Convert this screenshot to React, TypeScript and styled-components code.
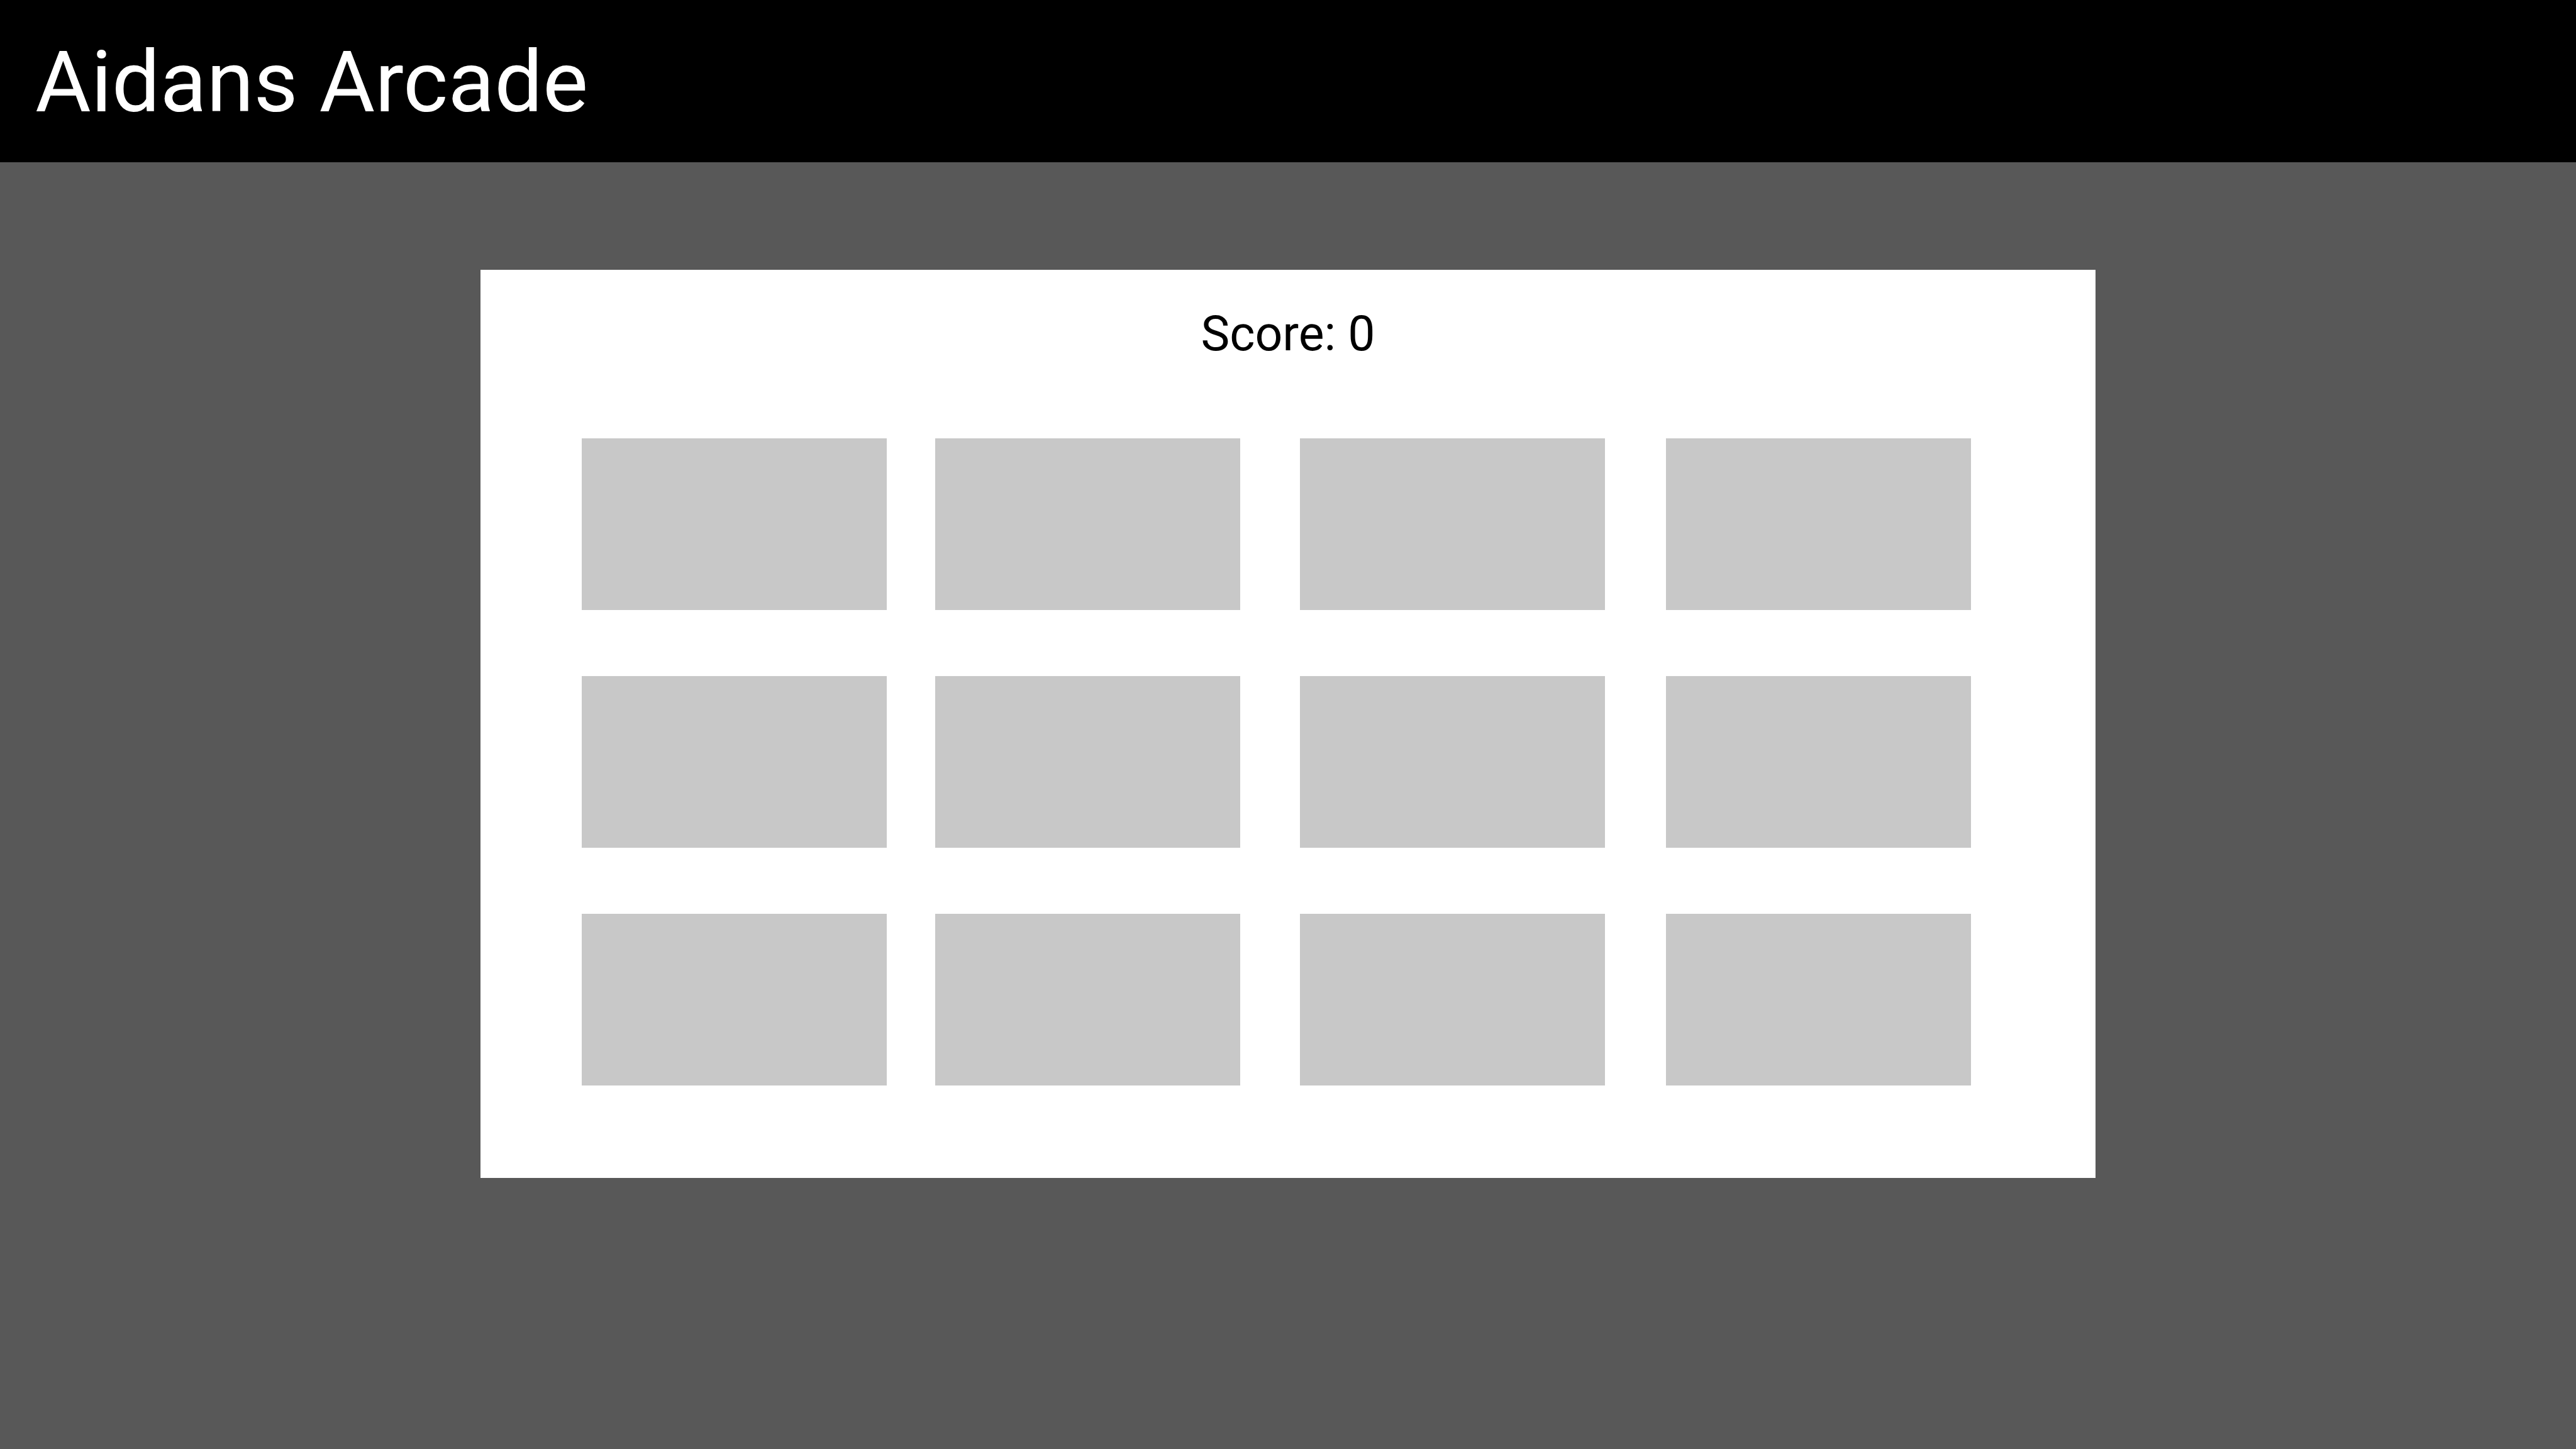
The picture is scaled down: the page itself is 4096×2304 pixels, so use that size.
import React, { useState } from "react";
import styled, { createGlobalStyle } from "styled-components";

const GlobalStyle = createGlobalStyle`
  *, *::before, *::after {
    box-sizing: border-box;
  }

  body {
    margin: 0;
    background: #585858;
    font-family: Roboto, "Liberation Sans", sans-serif;
  }
`;

const Header = styled.header`
  display: flex;
  align-items: center;
  padding: 51px 56px 47px;
  background: #000000;
`;

const Title = styled.h1`
  margin: 0;
  color: #ffffff;
  font-size: 136px;
  font-weight: 400;
  line-height: 160px;
`;

const Main = styled.main`
  display: flex;
  justify-content: center;
  padding: 171px 64px;
`;

const Game = styled.section`
  flex: 1;
  max-width: 2568px;
  padding: 57px 0 147px;
  background: #ffffff;
`;

const Score = styled.p`
  margin: 0 0 121px;
  color: #000000;
  font-size: 77px;
  line-height: 90px;
  text-align: center;
`;

const Board = styled.div`
  display: grid;
  grid-template-columns: 485fr 77fr 485fr 95fr 485fr 97fr 485fr;
  row-gap: 105px;
  padding: 0 198px 0 161px;
`;

const Tile = styled.button<{ $column: number }>`
  grid-column: ${({ $column }) => $column * 2 + 1};
  height: 273px;
  padding: 0;
  border: 0;
  background: #c8c8c8;
  cursor: pointer;
`;

const COLUMNS = 4;
const TILES = Array.from({ length: 12 }, (_, index) => index);

export default function App() {
  const [score] = useState(0);

  return (
    <>
      <GlobalStyle />
      <Header>
        <Title>Aidans Arcade</Title>
      </Header>
      <Main>
        <Game>
          <Score>Score: {score}</Score>
          <Board>
            {TILES.map((tile) => (
              <Tile
                key={tile}
                type="button"
                $column={tile % COLUMNS}
                aria-label={`Tile ${tile + 1}`}
              />
            ))}
          </Board>
        </Game>
      </Main>
    </>
  );
}
